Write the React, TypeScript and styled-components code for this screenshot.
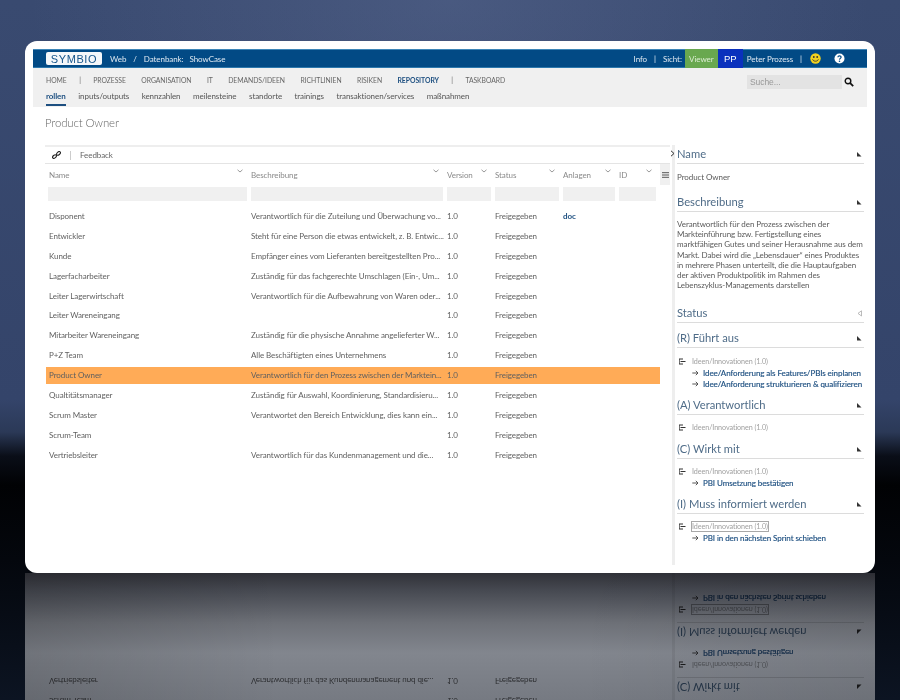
import React from "react";
import styled, { createGlobalStyle } from "styled-components";

const Global = createGlobalStyle`
  html, body { margin: 0; padding: 0; background: #000; }
  body { font-family: Lato, "Open Sans", sans-serif; font-size: 8px; letter-spacing: -0.08px; color: #555; }
`;

const Stage = styled.div`
  position: relative;
  width: 900px;
  height: 700px;
  overflow: hidden;
  padding: 41px 25px 0;
  box-sizing: border-box;
  background:
    radial-gradient(ellipse 420px 260px at 50% 0, rgba(110, 125, 165, 0.3), rgba(110, 125, 165, 0) 100%),
    linear-gradient(180deg, #394a70 0, #34446a 400px, #2b3957 432px, #0a0e18 456px, #010204 485px, #04070d 560px, #0c1422 700px);
`;

const Card = styled.div`
  position: relative;
  z-index: 2;
  width: 850px;
  height: 532px;
  box-sizing: border-box;
  padding: 8px 8px 0;
  background: #fff;
  border-radius: 12px;
  filter: blur(0.3px);
`;

const Reflection = styled.div`
  position: absolute;
  left: 25px;
  top: 573px;
  width: 850px;
  height: 127px;
  overflow: hidden;
  background:
    linear-gradient(90deg, rgba(0, 0, 0, 0.14), rgba(0, 0, 0, 0) 30%, rgba(0, 0, 0, 0) 65%, rgba(0, 0, 0, 0.08)),
    linear-gradient(180deg, #303138 0, #474a52 18px, #6e7178 50px, #82868e 80px, #767a82 127px);
`;

const Mirror = styled.div`
  position: absolute;
  left: 0;
  top: -10px;
  width: 850px;
  height: 532px;
  box-sizing: border-box;
  padding: 8px 8px 0;
  transform: scaleY(-1);
  mix-blend-mode: multiply;
  filter: blur(0.45px);
`;

const Header = styled.header`
  display: flex;
  justify-content: space-between;
  align-items: stretch;
  height: 19px;
  background: #024a85;
  color: #dfe9f2;
  padding: 0 22px 0 13px;
  box-shadow: inset 0 1px 0 #3d86b8, inset 0 -1px 0 #2c78ad;
`;

const HeaderSide = styled.div`
  display: flex;
  align-items: center;
`;

const Logo = styled.span`
  display: inline-flex;
  align-items: center;
  justify-content: center;
  width: 56px;
  height: 13px;
  background: #f4f7fa;
  border-radius: 2px;
  margin-right: 8px;
  color: #16568c;
  font-family: "Liberation Sans", sans-serif;
  font-size: 11px;
  letter-spacing: 0.6px;
`;

const HeaderText = styled.span<{ $ml?: number }>`
  margin-left: ${(p) => p.$ml ?? 0}px;
  white-space: nowrap;
`;

const Viewer = styled.span`
  display: flex;
  align-items: center;
  justify-content: center;
  align-self: stretch;
  width: 33px;
  margin-left: 3px;
  background: #69a84f;
  color: #dcecd2;
`;

const Initials = styled.span`
  display: flex;
  align-items: center;
  justify-content: center;
  align-self: stretch;
  width: 25px;
  background: #0b31bd;
  color: #fff;
  font-family: "Liberation Sans", sans-serif;
  font-size: 9.5px;
`;

const GlyphBox = styled.svg<{ $ml?: number }>`
  margin-left: ${(p) => p.$ml ?? 0}px;
  flex: none;
`;

const Nav = styled.nav`
  display: flex;
  justify-content: space-between;
  align-items: flex-start;
  height: 39px;
  box-sizing: border-box;
  background: #f0f0f0;
  padding: 4px 13px 0;
`;

const NavRows = styled.div`
  display: flex;
  flex-direction: column;
`;

const TopRow = styled.div`
  display: flex;
  align-items: center;
  height: 16px;
  gap: 15.4px;
  font-size: 6.8px;
  letter-spacing: -0.03px;
  color: #666;
`;

const TopItem = styled.span<{ $active?: boolean; $pipe?: boolean }>`
  white-space: nowrap;
  margin: ${(p) => (p.$pipe ? "0 -3px" : "0")};
  font-weight: ${(p) => (p.$active ? 700 : 400)};
  color: ${(p) => (p.$active ? "#1d4f80" : "inherit")};
`;

const SubRow = styled.div`
  display: flex;
  align-items: stretch;
  height: 18px;
  gap: 12.5px;
  font-size: 8px;
  color: #555;
`;

const SubItem = styled.span<{ $active?: boolean }>`
  display: flex;
  align-items: center;
  box-sizing: border-box;
  white-space: nowrap;
  font-weight: ${(p) => (p.$active ? 700 : 400)};
  color: ${(p) => (p.$active ? "#1d4f80" : "inherit")};
  border-bottom: 2px solid ${(p) => (p.$active ? "#1d4f80" : "transparent")};
`;

const SearchBox = styled.div`
  display: flex;
  align-items: center;
  gap: 2px;
  margin-top: 3px;
`;

const SearchField = styled.div`
  width: 92px;
  height: 14px;
  padding-left: 3px;
  background: #e3e3e3;
  color: #999;
  font-family: "Liberation Sans", sans-serif;
  font-size: 8.5px;
  line-height: 14px;
`;

const Main = styled.main`
  padding: 0 3px 0 12px;
`;

const Title = styled.h1`
  height: 38px;
  margin: 0;
  padding-top: 8px;
  box-sizing: border-box;
  font-size: 11.4px;
  letter-spacing: -0.12px;
  line-height: 16px;
  font-weight: 300;
  color: #666;
`;

const Columns = styled.div`
  display: flex;
  align-items: stretch;
  height: 420px;
  gap: 2px;
`;

const TablePane = styled.section`
  width: 625px;
  flex: none;
`;

const Toolbar = styled.div`
  display: flex;
  align-items: center;
  height: 19px;
  box-sizing: border-box;
  border-top: 2px solid #eee;
  border-bottom: 1px solid #e4e4e4;
  padding-left: 7px;
  color: #666;
`;

const ToolSep = styled.span`
  width: 1px;
  height: 9px;
  margin: 0 9px 0 9px;
  background: #ccc;
`;

const COLS = "206px 196px 48px 68px 56px 41px 10px";

const HeadRow = styled.div`
  display: grid;
  grid-template-columns: ${COLS};
  height: 21px;
  color: #8a8a8a;
`;

const HeadCell = styled.div<{ $first?: boolean }>`
  display: flex;
  justify-content: space-between;
  align-items: center;
  padding: 0 8px 0 ${(p) => (p.$first ? 4 : 0)}px;
`;

const Chevron = styled.svg`
  align-self: flex-start;
  margin-top: 5px;
`;

const MenuCell = styled.div`
  display: flex;
  align-items: center;
  justify-content: center;
  background: #f0f0f0;
`;

const FilterRow = styled.div`
  display: grid;
  grid-template-columns: ${COLS};
  height: 14px;
  margin: 2px 0 5px;
`;

const FilterCell = styled.div<{ $first?: boolean }>`
  margin: 0 4px 0 ${(p) => (p.$first ? 3 : 0)}px;
  background: #f0f0f0;
`;

const Row = styled.div<{ $selected?: boolean }>`
  display: grid;
  grid-template-columns: 205px 196px 48px 68px 56px 41px;
  align-items: center;
  height: 19.9px;
  margin-left: 1px;
  width: 614px;
  white-space: nowrap;
  color: #5f5f5f;
  background: ${(p) => (p.$selected ? "linear-gradient(#ffab57 0, #ffab57 100%) center / 100% 17px no-repeat" : "none")};
`;

const NameCell = styled.span`
  padding-left: 3px;
`;

const DocLink = styled.span`
  color: #1d4f80;
  font-weight: 700;
`;

const Detail = styled.aside`
  flex: 1;
  min-width: 0;
  display: flex;
  flex-direction: column;
  border-left: 3px solid #eeeeee;
  padding-left: 2px;
  position: relative;
`;

const Expander = styled.svg`
  position: absolute;
  left: -5px;
  top: 5px;
`;

const SectionHead = styled.div<{ $gap?: number }>`
  display: flex;
  justify-content: space-between;
  align-items: flex-start;
  height: 17px;
  box-sizing: border-box;
  margin-top: ${(p) => p.$gap ?? 0}px;
  border-bottom: 1px solid #dcdcdc;
  font-size: 11.2px;
  letter-spacing: 0;
  line-height: 14px;
  color: #4f6c88;
  white-space: nowrap;
`;

const Marker = styled.svg`
  margin: 4px 2px 0 0;
`;

const SectionBody = styled.div<{ $h: number; $pt?: number }>`
  height: ${(p) => p.$h}px;
  box-sizing: border-box;
  padding-top: ${(p) => p.$pt ?? 7}px;
  color: #5a5a5a;
`;

const Paragraph = styled.p`
  margin: 0;
  line-height: 10.2px;
  white-space: nowrap;
`;

const Process = styled.div`
  display: flex;
  align-items: center;
  height: 12px;
  gap: 6px;
  padding-left: 2px;
`;

const ProcessName = styled.span<{ $boxed?: boolean }>`
  color: #a0a0a0;
  font-size: 7.2px;
  white-space: nowrap;
  box-shadow: ${(p) => (p.$boxed ? "0 0 0 1px #a8a8a8" : "none")};
`;

const TaskLink = styled.div`
  display: flex;
  align-items: center;
  height: 11.5px;
  gap: 4px;
  padding-left: 15px;
  color: #1d4f80;
  white-space: nowrap;
  -webkit-text-stroke: 0.15px #1d4f80;
`;

const TaskArrow = styled.svg`
  flex: none;
`;

const rows: [string, string, string?][] = [
  ["Disponent", "Verantwortlich für die Zuteilung und Überwachung vo...", "doc"],
  ["Entwickler", "Steht für eine Person die etwas entwickelt, z. B. Entwic..."],
  ["Kunde", "Empfänger eines vom Lieferanten bereitgestellten Pro..."],
  ["Lagerfacharbeiter", "Zuständig für das fachgerechte Umschlagen (Ein-, Um..."],
  ["Leiter Lagerwirtschaft", "Verantwortlich für die Aufbewahrung von Waren oder..."],
  ["Leiter Wareneingang", ""],
  ["Mitarbeiter Wareneingang", "Zuständig für die physische Annahme angelieferter W..."],
  ["P+Z Team", "Alle Beschäftigten eines Unternehmens"],
  ["Product Owner", "Verantwortlich für den Prozess zwischen der Marktein..."],
  ["Qualtitätsmanager", "Zuständig für Auswahl, Koordinierung, Standardisieru..."],
  ["Scrum Master", "Verantwortet den Bereich Entwicklung, dies kann ein..."],
  ["Scrum-Team", ""],
  ["Vertriebsleiter", "Verantwortlich für das Kundenmanagement und die..."],
];

const topNav = ["HOME", "|", "PROZESSE", "ORGANISATION", "IT", "DEMANDS/IDEEN", "RICHTLINIEN", "RISIKEN", "REPOSITORY", "|", "TASKBOARD"];
const subNav = ["rollen", "inputs/outputs", "kennzahlen", "meilensteine", "standorte", "trainings", "transaktionen/services", "maßnahmen"];
const heads = ["Name", "Beschreibung", "Version", "Status", "Anlagen", "ID"];

const ChevronIcon = () => (
  <Chevron width="6" height="4" viewBox="0 0 6 4">
    <path d="M.5.8 3 3 5.5.8" fill="none" stroke="#999" strokeWidth="1" />
  </Chevron>
);

const CornerIcon = () => (
  <Marker width="6" height="6" viewBox="0 0 6 6">
    <path d="M1 1 5.5 5.5H1Z" fill="#333" />
  </Marker>
);

const OpenIcon = () => (
  <Marker width="5" height="7" viewBox="0 0 5 7">
    <path d="M4.5.8V6L1 3.4Z" fill="none" stroke="#aaa" strokeWidth=".8" />
  </Marker>
);

const TreeIcon = () => (
  <svg width="7" height="7" viewBox="0 0 7 7">
    <path d="M0 1h4M1.5 3.5h5M0 6h4" stroke="#333" strokeWidth="1" />
    <path d="M.5 1v5" stroke="#333" strokeWidth=".7" />
  </svg>
);

const ArrowIcon = () => (
  <TaskArrow width="7" height="6" viewBox="0 0 7 6">
    <path d="M.3 3h5.6M3.8.8 6 3 3.8 5.2" fill="none" stroke="#444" strokeWidth=".9" />
  </TaskArrow>
);

const Task = ({ children }: { children: React.ReactNode }) => (
  <TaskLink>
    <ArrowIcon />
    {children}
  </TaskLink>
);

const Proc = ({ boxed }: { boxed?: boolean }) => (
  <Process>
    <TreeIcon />
    <ProcessName $boxed={boxed}>Ideen/Innovationen (1.0)</ProcessName>
  </Process>
);

const Content = () => (
  <>
    <Header>
      <HeaderSide>
        <Logo>SYMBIO</Logo>
        <HeaderText>Web</HeaderText>
        <HeaderText $ml={7}>/</HeaderText>
        <HeaderText $ml={7}>Datenbank:</HeaderText>
        <HeaderText $ml={6}>ShowCase</HeaderText>
      </HeaderSide>
      <HeaderSide>
        <HeaderText>Info</HeaderText>
        <HeaderText $ml={7}>|</HeaderText>
        <HeaderText $ml={7}>Sicht:</HeaderText>
        <Viewer>Viewer</Viewer>
        <Initials>PP</Initials>
        <HeaderText $ml={4}>Peter Prozess</HeaderText>
        <HeaderText $ml={7}>|</HeaderText>
        <GlyphBox $ml={8} width="11" height="11" viewBox="0 0 11 11">
          <circle cx="5.5" cy="5.5" r="5.2" fill="#f3d21f" />
          <circle cx="3.8" cy="4" r=".9" fill="#333" />
          <circle cx="7.2" cy="4" r=".9" fill="#333" />
          <path d="M2.6 6.4C3.5 8.8 7.5 8.8 8.4 6.4" fill="none" stroke="#333" strokeWidth=".9" />
        </GlyphBox>
        <GlyphBox $ml={13} width="11" height="11" viewBox="0 0 11 11">
          <circle cx="5.5" cy="5.5" r="5" fill="#fff" />
          <path d="M3.9 4.2C4 2.4 7.2 2.5 7.1 4.3 7 5.4 5.6 5.4 5.5 6.6" fill="none" stroke="#024a85" strokeWidth="1.2" />
          <circle cx="5.5" cy="8.3" r=".8" fill="#024a85" />
        </GlyphBox>
      </HeaderSide>
    </Header>
    <Nav>
      <NavRows>
        <TopRow>
          {topNav.map((t, i) => (
            <TopItem key={i} $active={t === "REPOSITORY"} $pipe={t === "|"}>{t}</TopItem>
          ))}
        </TopRow>
        <SubRow>
          {subNav.map((t) => (
            <SubItem key={t} $active={t === "rollen"}>{t}</SubItem>
          ))}
        </SubRow>
      </NavRows>
      <SearchBox>
        <SearchField>Suche...</SearchField>
        <svg width="10" height="10" viewBox="0 0 10 10">
          <circle cx="4" cy="4" r="2.8" fill="none" stroke="#111" strokeWidth="1.4" />
          <path d="M6.2 6.2 9.2 9.2" stroke="#111" strokeWidth="1.8" />
        </svg>
      </SearchBox>
    </Nav>
    <Main>
      <Title>Product Owner</Title>
      <Columns>
        <TablePane>
          <Toolbar>
            <svg width="9" height="8" viewBox="0 0 9 8">
              <ellipse cx="2.5" cy="5.6" rx="2.2" ry="1.4" transform="rotate(-40 2.5 5.6)" fill="none" stroke="#222" strokeWidth="1.1" />
              <ellipse cx="6.5" cy="2.4" rx="2.2" ry="1.4" transform="rotate(-40 6.5 2.4)" fill="none" stroke="#222" strokeWidth="1.1" />
            </svg>
            <ToolSep />
            Feedback
          </Toolbar>
          <HeadRow>
            {heads.map((h, i) => (
              <HeadCell key={h} $first={i === 0}>
                {h}
                <ChevronIcon />
              </HeadCell>
            ))}
            <MenuCell>
              <svg width="7" height="6" viewBox="0 0 7 6">
                <path d="M0 .7h7M0 3h7M0 5.3h7" stroke="#555" strokeWidth="1" />
              </svg>
            </MenuCell>
          </HeadRow>
          <FilterRow>
            {heads.map((h, i) => (
              <FilterCell key={h} $first={i === 0} />
            ))}
          </FilterRow>
          {rows.map(([name, desc, doc]) => (
            <Row key={name} $selected={name === "Product Owner"}>
              <NameCell>{name}</NameCell>
              <span>{desc}</span>
              <span>1.0</span>
              <span>Freigegeben</span>
              <DocLink>{doc}</DocLink>
            </Row>
          ))}
        </TablePane>
        <Detail>
          <Expander width="5" height="7" viewBox="0 0 5 7">
            <path d="M1 .8 4 3.5 1 6.2" fill="none" stroke="#333" strokeWidth="1" />
          </Expander>
          <SectionHead $gap={2}>Name<CornerIcon /></SectionHead>
          <SectionBody $h={31} $pt={8}>Product Owner</SectionBody>
          <SectionHead>Beschreibung<CornerIcon /></SectionHead>
          <SectionBody $h={94}>
            <Paragraph>
              Verantwortlich für den Prozess zwischen der
              <br />Markteinführung bzw. Fertigstellung eines
              <br />marktfähigen Gutes und seiner Herausnahme aus dem
              <br />Markt. Dabei wird die „Lebensdauer“ eines Produktes
              <br />in mehrere Phasen unterteilt, die die Hauptaufgaben
              <br />der aktiven Produktpolitik im Rahmen des
              <br />Lebenszyklus-Managements darstellen
            </Paragraph>
          </SectionBody>
          <SectionHead>Status<OpenIcon /></SectionHead>
          <SectionHead $gap={8}>(R) Führt aus<CornerIcon /></SectionHead>
          <SectionBody $h={50}>
            <Proc />
            <Task>Idee/Anforderung als Features/PBIs einplanen</Task>
            <Task>Idee/Anforderung strukturieren &amp; qualifizieren</Task>
          </SectionBody>
          <SectionHead>(A) Verantwortlich<CornerIcon /></SectionHead>
          <SectionBody $h={27} $pt={6}>
            <Proc />
          </SectionBody>
          <SectionHead>(C) Wirkt mit<CornerIcon /></SectionHead>
          <SectionBody $h={38} $pt={6}>
            <Proc />
            <Task>PBI Umsetzung bestätigen</Task>
          </SectionBody>
          <SectionHead>(I) Muss informiert werden<CornerIcon /></SectionHead>
          <SectionBody $h={40} $pt={6}>
            <Proc boxed />
            <Task>PBI in den nächsten Sprint schieben</Task>
          </SectionBody>
        </Detail>
      </Columns>
    </Main>
  </>
);

export default function App() {
  return (
    <Stage>
      <Global />
      <Card>
        <Content />
      </Card>
      <Reflection aria-hidden="true">
        <Mirror>
          <Content />
        </Mirror>
      </Reflection>
    </Stage>
  );
}
